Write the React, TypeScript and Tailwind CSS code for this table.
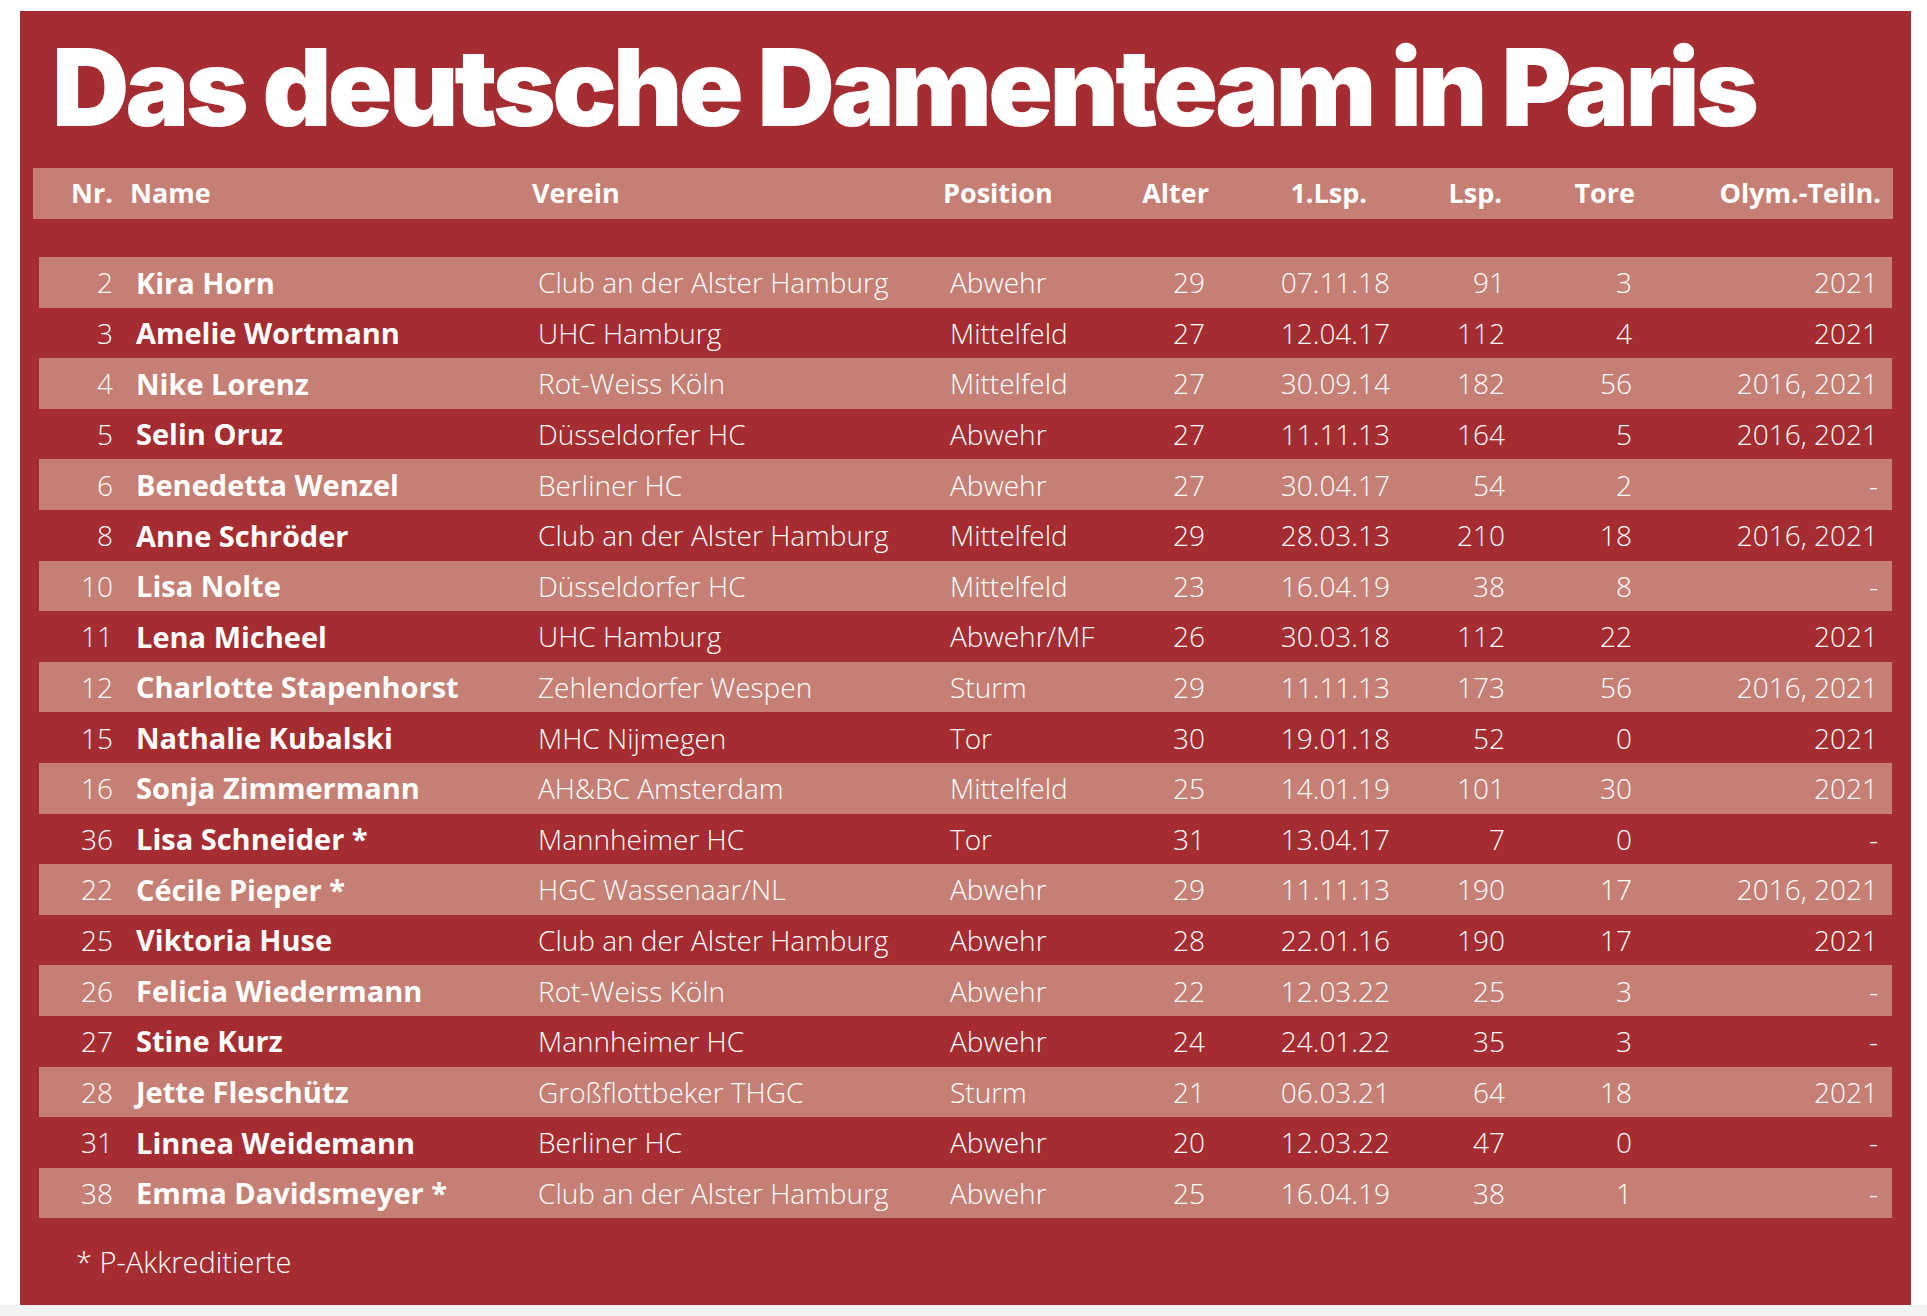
import React from "react";

type Player = {
  nr: string;
  name: string;
  verein: string;
  position: string;
  alter: string;
  first: string;
  lsp: string;
  tore: string;
  olym: string;
};

const players: Player[] = [
  { nr: "2", name: "Kira Horn", verein: "Club an der Alster Hamburg", position: "Abwehr", alter: "29", first: "07.11.18", lsp: "91", tore: "3", olym: "2021" },
  { nr: "3", name: "Amelie Wortmann", verein: "UHC Hamburg", position: "Mittelfeld", alter: "27", first: "12.04.17", lsp: "112", tore: "4", olym: "2021" },
  { nr: "4", name: "Nike Lorenz", verein: "Rot-Weiss Köln", position: "Mittelfeld", alter: "27", first: "30.09.14", lsp: "182", tore: "56", olym: "2016, 2021" },
  { nr: "5", name: "Selin Oruz", verein: "Düsseldorfer HC", position: "Abwehr", alter: "27", first: "11.11.13", lsp: "164", tore: "5", olym: "2016, 2021" },
  { nr: "6", name: "Benedetta Wenzel", verein: "Berliner HC", position: "Abwehr", alter: "27", first: "30.04.17", lsp: "54", tore: "2", olym: "-" },
  { nr: "8", name: "Anne Schröder", verein: "Club an der Alster Hamburg", position: "Mittelfeld", alter: "29", first: "28.03.13", lsp: "210", tore: "18", olym: "2016, 2021" },
  { nr: "10", name: "Lisa Nolte", verein: "Düsseldorfer HC", position: "Mittelfeld", alter: "23", first: "16.04.19", lsp: "38", tore: "8", olym: "-" },
  { nr: "11", name: "Lena Micheel", verein: "UHC Hamburg", position: "Abwehr/MF", alter: "26", first: "30.03.18", lsp: "112", tore: "22", olym: "2021" },
  { nr: "12", name: "Charlotte Stapenhorst", verein: "Zehlendorfer Wespen", position: "Sturm", alter: "29", first: "11.11.13", lsp: "173", tore: "56", olym: "2016, 2021" },
  { nr: "15", name: "Nathalie Kubalski", verein: "MHC Nijmegen", position: "Tor", alter: "30", first: "19.01.18", lsp: "52", tore: "0", olym: "2021" },
  { nr: "16", name: "Sonja Zimmermann", verein: "AH&BC Amsterdam", position: "Mittelfeld", alter: "25", first: "14.01.19", lsp: "101", tore: "30", olym: "2021" },
  { nr: "36", name: "Lisa Schneider *", verein: "Mannheimer HC", position: "Tor", alter: "31", first: "13.04.17", lsp: "7", tore: "0", olym: "-" },
  { nr: "22", name: "Cécile Pieper *", verein: "HGC Wassenaar/NL", position: "Abwehr", alter: "29", first: "11.11.13", lsp: "190", tore: "17", olym: "2016, 2021" },
  { nr: "25", name: "Viktoria Huse", verein: "Club an der Alster Hamburg", position: "Abwehr", alter: "28", first: "22.01.16", lsp: "190", tore: "17", olym: "2021" },
  { nr: "26", name: "Felicia Wiedermann", verein: "Rot-Weiss Köln", position: "Abwehr", alter: "22", first: "12.03.22", lsp: "25", tore: "3", olym: "-" },
  { nr: "27", name: "Stine Kurz", verein: "Mannheimer HC", position: "Abwehr", alter: "24", first: "24.01.22", lsp: "35", tore: "3", olym: "-" },
  { nr: "28", name: "Jette Fleschütz", verein: "Großflottbeker THGC", position: "Sturm", alter: "21", first: "06.03.21", lsp: "64", tore: "18", olym: "2021" },
  { nr: "31", name: "Linnea Weidemann", verein: "Berliner HC", position: "Abwehr", alter: "20", first: "12.03.22", lsp: "47", tore: "0", olym: "-" },
  { nr: "38", name: "Emma Davidsmeyer *", verein: "Club an der Alster Hamburg", position: "Abwehr", alter: "25", first: "16.04.19", lsp: "38", tore: "1", olym: "-" },
];

const HeaderRow = () => (
  <div className="ml-[13px] grid h-[51px] w-[1860px] grid-cols-[80px_419px_411px_186px_80px_158px_135px_133px_246px] items-center bg-[#c57f74] pr-[12px] text-[27px] font-bold text-white">
    <div className="text-right">Nr.</div>
    <div className="pl-[17px]">Name</div>
    <div>Verein</div>
    <div>Position</div>
    <div className="text-right">Alter</div>
    <div className="text-right">1.Lsp.</div>
    <div className="text-right">Lsp.</div>
    <div className="text-right">Tore</div>
    <div className="text-right">Olym.-Teiln.</div>
  </div>
);

const PlayerRow = ({ p, light }: { p: Player; light: boolean }) => (
  <div
    className={
      "grid h-[50.6px] w-[1853px] grid-cols-[74px_425px_412px_175px_80px_185px_115px_127px_246px] items-center pr-[14px] text-[28px] font-light text-white " +
      (light ? "bg-[#c57f74]" : "bg-[#a52c30]")
    }
  >
    <div className="text-right">{p.nr}</div>
    <div className="pl-[23px] text-[29px] font-bold">{p.name}</div>
    <div>{p.verein}</div>
    <div>{p.position}</div>
    <div className="text-right">{p.alter}</div>
    <div className="text-right">{p.first}</div>
    <div className="text-right">{p.lsp}</div>
    <div className="text-right">{p.tore}</div>
    <div className="text-right">{p.olym}</div>
  </div>
);

export default function App() {
  return (
    <div
      className="flex h-[1316px] w-full flex-col bg-white"
      style={{ fontFamily: '"Open Sans", "Noto Sans", sans-serif' }}
    >
      <div className="pl-[20px] pt-[11px]">
        <div className="h-[1294px] w-[1891px] bg-[#a52c30]">
          <h1
            className="ml-[32px] pt-[23px] text-[107px] font-black leading-none tracking-[-0.035em] text-white"
            style={{ fontFamily: 'Inter, "Noto Sans", sans-serif' }}
          >
            Das deutsche Damenteam in Paris
          </h1>
          <div className="mt-[27px]">
            <HeaderRow />
          </div>
          <div className="ml-[19px] mt-[38px] flex flex-col">
            {players.map((p, i) => (
              <PlayerRow key={p.nr + p.name} p={p} light={i % 2 === 0} />
            ))}
          </div>
          <div className="ml-[56px] mt-[29px] text-[29px] font-light leading-none text-white">
            * P-Akkreditierte
          </div>
        </div>
      </div>
      <div className="flex-1 bg-[#f3f3f5]" />
    </div>
  );
}
